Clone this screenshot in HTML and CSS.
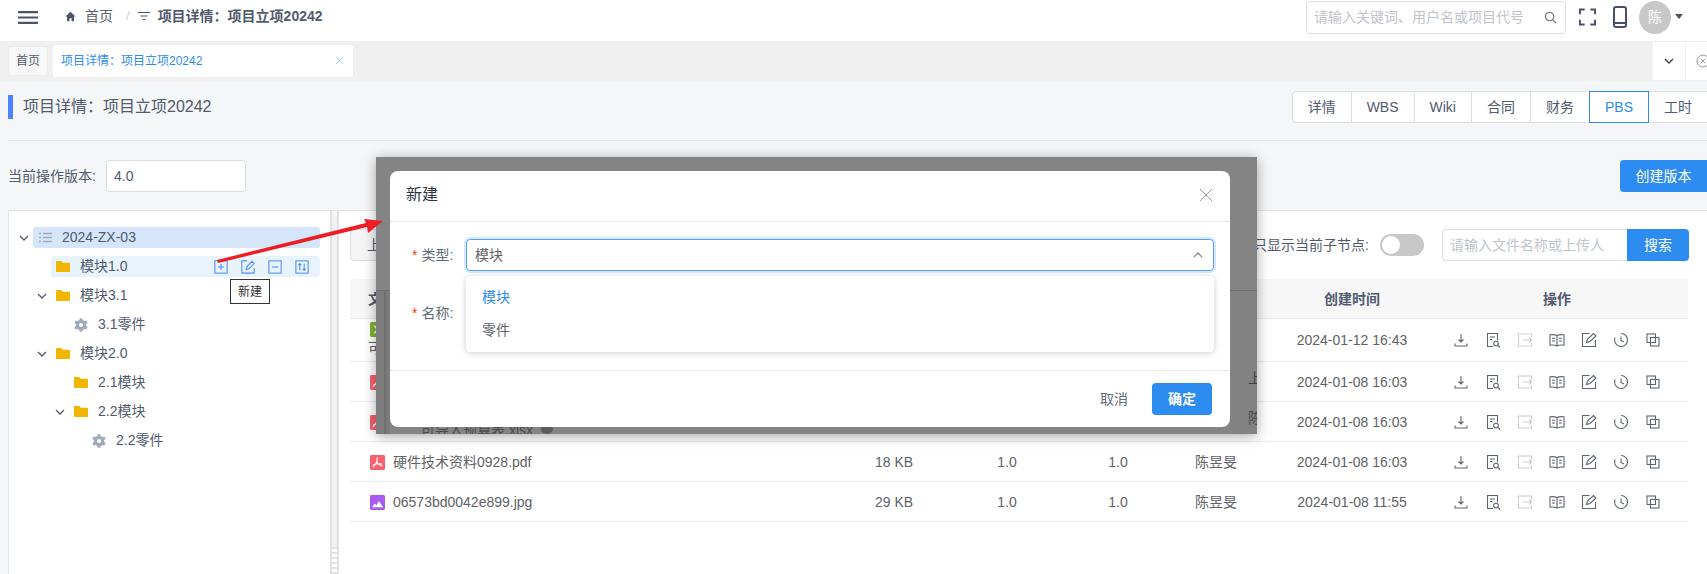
FILE: index.html
```html
<!DOCTYPE html>
<html lang="zh-CN">
<head>
<meta charset="utf-8">
<title>项目详情</title>
<link rel="stylesheet" href="styles.css">
</head>
<body>
<svg class="sprite" width="0" height="0" aria-hidden="true">
  <symbol id="i-download" viewBox="0 0 16 16"><path d="M8 2v8M5.500 7.500 8 10l2.500-2.500M2 11.500v2.500h12v-2.500"/></symbol>
  <symbol id="i-docsearch" viewBox="0 0 16 16"><path d="M8 14.500H2.500v-13h10v7M5 5h5M5 7.500h2.500M13 13.500l2 2"/><circle cx="11" cy="11.500" r="2.300"/></symbol>
  <symbol id="i-export" viewBox="0 0 16 16"><path d="M14.500 5V2h-13v12h13v-3M6 8h8.500M12 5.500 14.500 8 12 10.500"/></symbol>
  <symbol id="i-book" viewBox="0 0 16 16"><path d="M8 3.500C6 2.500 3 2.500 1 2.800v10.400c2-.3 5-.3 7 .8 2-1.100 5-1.100 7-.8V2.800c-2-.3-5-.3-7 .7zM8 3.500V14M3 6.300h3M3 9h3M10 6.300h3M10 9h3"/></symbol>
  <symbol id="i-edit" viewBox="0 0 16 16"><path d="M14.500 8v6.500h-13v-13h7M5.500 10.500l1-3.500 6-5.500 2.500 2.500-6 5.500z"/></symbol>
  <symbol id="i-clock" viewBox="0 0 16 16"><path d="M8 1.500a6.500 6.500 0 1 1-6 4M8 4.500v4l3 1.500"/></symbol>
  <symbol id="i-copy" viewBox="0 0 16 16"><rect x="2" y="2" width="8.500" height="8.500"/><rect x="5.500" y="5.500" width="8.500" height="8.500"/></symbol>
  <symbol id="i-gear" viewBox="0 0 16 16"><g class="gear"><path d="M8 .2v15.600M1.200 4.100l13.600 7.800M1.200 11.900l13.600-7.800"/></g><circle class="gear-body" cx="8" cy="8" r="6"/><circle class="gear-hole" cx="8" cy="8" r="2.300"/></symbol>
  <symbol id="i-folder" viewBox="0 0 14 11"><path d="M.8 0h4.400l1.800 1.800h6.200c.4 0 .8.400.8.800v7.600c0 .4-.4.800-.8.800H.8c-.4 0-.8-.4-.8-.8V.8C0 .4.400 0 .8 0z"/></symbol>
  <symbol id="i-chev" viewBox="0 0 10 6"><path d="M1 1l4 4 4-4"/></symbol>
  <symbol id="i-pdf" viewBox="0 0 16 16"><rect width="16" height="16" rx="1.500" fill="#f8616e"/><path d="M7.500 2.500c.6 3-1 7-4.500 10.500M7.500 8c1 1.500 3 3.500 5.800 4M3.500 10.500c2.500-1 6-1.500 9.500-.8" fill="none" stroke="#fff" stroke-width="1.200"/></symbol>
  <symbol id="i-img" viewBox="0 0 16 16"><rect width="16" height="16" rx="1.500" fill="#a95af0"/><path d="M2 13l3-4 2 2 2.500-4.500L14 13z" fill="#fff"/></symbol>
  <symbol id="i-xls" viewBox="0 0 16 16"><rect width="16" height="16" rx="1.500" fill="#7db72f"/><path d="M4.500 4l7 8M11.500 4l-7 8" fill="none" stroke="#fff" stroke-width="1.600"/></symbol>
</svg>

<header class="navbar">
  <svg class="hamburger" viewBox="0 0 20 13"><path d="M0 1.200h20M0 6.500h20M0 11.800h20"/></svg>
  <nav class="crumbs">
    <svg class="crumb-icon" viewBox="0 0 12 12"><path class="solid" d="M6 .8.500 6h1.700v5.200h2.600V7.800h2.400v3.400h2.600V6h1.700z"/></svg>
    <span class="crumb-link">首页</span>
    <span class="crumb-sep">/</span>
    <svg class="crumb-filter" viewBox="0 0 12 10"><path d="M0 1.500h12M2.500 5h7M4.500 8.500h3"/></svg>
    <strong class="crumb-current">项目详情&#xFF1A;项目立项20242</strong>
  </nav>
  <div class="nav-right">
    <div class="nav-search">
      <input class="nav-search-input" type="text" placeholder="请输入关键词、用户名或项目代号">
      <svg class="nav-search-icon" viewBox="0 0 14 14"><circle cx="6" cy="6" r="4.500"/><path d="M9.500 9.500 13 13"/></svg>
    </div>
    <svg class="fullscreen" viewBox="0 0 18 18"><path d="M1 6V1h5M12 1h5v5M17 12v5h-5M6 17H1v-5"/></svg>
    <svg class="phone" viewBox="0 0 14 22"><rect x="1" y="1" width="12" height="20" rx="2"/><path d="M1 17h12" /></svg>
    <span class="avatar">陈</span>
    <span class="caret"></span>
  </div>
</header>

<div class="tagsbar">
  <span class="tag">首页</span>
  <span class="tag tag-active">项目详情&#xFF1A;项目立项20242<svg class="tag-close" viewBox="0 0 10 10"><path d="M1 1l8 8M9 1 1 9"/></svg></span>
  <span class="tags-tools">
    <span class="tool-btn"><svg class="tool-chev" viewBox="0 0 10 6"><use href="#i-chev"/></svg></span>
    <span class="tool-btn tool-close"><svg class="tool-x" viewBox="0 0 14 14"><circle cx="7" cy="7" r="6"/><path d="M4.700 4.700l4.600 4.600M9.300 4.700l-4.600 4.600"/></svg></span>
  </span>
</div>

<main class="page">
  <div class="title-row">
    <h1 class="page-title">项目详情&#xFF1A;项目立项20242</h1>
    <div class="tabs">
      <span class="tab">详情</span><span class="tab">WBS</span><span class="tab">Wiki</span><span class="tab">合同</span><span class="tab">财务</span><span class="tab tab-on">PBS</span><span class="tab">工时</span>
    </div>
  </div>
  <div class="version-row">
    <label class="version-label">当前操作版本:</label>
    <input class="version-input" type="text" value="4.0">
    <button class="btn-create">创建版本</button>
  </div>

  <div class="workspace">
    <aside class="tree-panel">
      <div class="tree">
        <div class="node lvl0">
          <svg class="chev" viewBox="0 0 10 6"><use href="#i-chev"/></svg>
          <div class="node-body node-root">
            <svg class="list-icon" viewBox="0 0 13 11"><path d="M0 1.500h2M4 1.500h9M0 5.500h2M4 5.500h9M0 9.500h2M4 9.500h9"/></svg>
            <span class="node-text">2024-ZX-03</span>
          </div>
        </div>
        <div class="node lvl1">
          <span class="chev-space"></span>
          <div class="node-body node-hover">
            <svg class="folder"><use href="#i-folder"/></svg>
            <span class="node-text">模块1.0</span>
            <div class="node-actions">
              <svg class="act" viewBox="0 0 16 16"><rect x="1" y="1" width="14" height="14"/><path d="M8 4.500v7M4.500 8h7"/></svg>
              <svg class="act" viewBox="0 0 16 16"><path d="M15 9v6H1V1h6M6 11l.8-3.500L12.500 1.500l2.500 2.500-6 6z"/></svg>
              <svg class="act" viewBox="0 0 16 16"><rect x="1" y="1" width="14" height="14"/><path d="M4.500 8h7"/></svg>
              <svg class="act" viewBox="0 0 16 16"><rect x="1" y="1" width="14" height="14"/><path d="M5.500 12V4M3.800 6l1.700-2 1.700 2M10.500 4v8M8.800 10l1.700 2 1.700-2"/></svg>
            </div>
            <span class="tooltip">新建</span>
          </div>
        </div>
        <div class="node lvl1">
          <svg class="chev" viewBox="0 0 10 6"><use href="#i-chev"/></svg>
          <div class="node-body"><svg class="folder"><use href="#i-folder"/></svg><span class="node-text">模块3.1</span></div>
        </div>
        <div class="node lvl2">
          <span class="chev-space"></span>
          <div class="node-body"><svg class="gear-icon"><use href="#i-gear"/></svg><span class="node-text">3.1零件</span></div>
        </div>
        <div class="node lvl1">
          <svg class="chev" viewBox="0 0 10 6"><use href="#i-chev"/></svg>
          <div class="node-body"><svg class="folder"><use href="#i-folder"/></svg><span class="node-text">模块2.0</span></div>
        </div>
        <div class="node lvl2">
          <span class="chev-space"></span>
          <div class="node-body"><svg class="folder"><use href="#i-folder"/></svg><span class="node-text">2.1模块</span></div>
        </div>
        <div class="node lvl2">
          <svg class="chev" viewBox="0 0 10 6"><use href="#i-chev"/></svg>
          <div class="node-body"><svg class="folder"><use href="#i-folder"/></svg><span class="node-text">2.2模块</span></div>
        </div>
        <div class="node lvl3">
          <span class="chev-space"></span>
          <div class="node-body"><svg class="gear-icon"><use href="#i-gear"/></svg><span class="node-text">2.2零件</span></div>
        </div>
      </div>
      <div class="splitter"><span class="splitter-grip"></span></div>
    </aside>

    <section class="files">
      <div class="toolbar">
        <button class="btn-upload">上传文件</button>
        <span class="only-label">只显示当前子节点:</span>
        <span class="switch"><span class="switch-knob"></span></span>
        <div class="file-search">
          <input class="file-search-input" type="text" placeholder="请输入文件名称或上传人">
          <button class="file-search-btn">搜索</button>
        </div>
      </div>
      <table class="grid">
        <colgroup>
          <col class="c-name"><col class="c-size"><col class="c-ver"><col class="c-rev"><col class="c-user"><col class="c-time"><col class="c-ops">
        </colgroup>
        <thead>
          <tr><th class="th-name">文件名称</th><th>大小</th><th>版本</th><th>修订</th><th>上传人</th><th>创建时间</th><th>操作</th></tr>
        </thead>
        <tbody>
          <tr class="row-tall">
            <td class="td-name td-top"><svg class="ficon"><use href="#i-xls"/></svg><div class="name-wrap">可行性报告.xlsx</div></td>
            <td></td><td></td><td></td><td></td>
            <td>2024-01-12 16:43</td>
            <td class="ops"><svg class="op"><use href="#i-download"/></svg><svg class="op"><use href="#i-docsearch"/></svg><svg class="op op-off"><use href="#i-export"/></svg><svg class="op"><use href="#i-book"/></svg><svg class="op"><use href="#i-edit"/></svg><svg class="op"><use href="#i-clock"/></svg><svg class="op"><use href="#i-copy"/></svg></td>
          </tr>
          <tr>
            <td class="td-name"><svg class="ficon"><use href="#i-pdf"/></svg></td>
            <td></td><td></td><td></td><td></td>
            <td>2024-01-08 16:03</td>
            <td class="ops"><svg class="op"><use href="#i-download"/></svg><svg class="op"><use href="#i-docsearch"/></svg><svg class="op op-off"><use href="#i-export"/></svg><svg class="op"><use href="#i-book"/></svg><svg class="op"><use href="#i-edit"/></svg><svg class="op"><use href="#i-clock"/></svg><svg class="op"><use href="#i-copy"/></svg></td>
          </tr>
          <tr>
            <td class="td-name"><svg class="ficon"><use href="#i-pdf"/></svg></td>
            <td></td><td></td><td></td><td></td>
            <td>2024-01-08 16:03</td>
            <td class="ops"><svg class="op"><use href="#i-download"/></svg><svg class="op"><use href="#i-docsearch"/></svg><svg class="op op-off"><use href="#i-export"/></svg><svg class="op"><use href="#i-book"/></svg><svg class="op"><use href="#i-edit"/></svg><svg class="op"><use href="#i-clock"/></svg><svg class="op"><use href="#i-copy"/></svg></td>
          </tr>
          <tr>
            <td class="td-name"><svg class="ficon"><use href="#i-pdf"/></svg><span class="fname">硬件技术资料0928.pdf</span></td>
            <td>18 KB</td><td>1.0</td><td>1.0</td><td>陈昱旻</td>
            <td>2024-01-08 16:03</td>
            <td class="ops"><svg class="op"><use href="#i-download"/></svg><svg class="op"><use href="#i-docsearch"/></svg><svg class="op op-off"><use href="#i-export"/></svg><svg class="op"><use href="#i-book"/></svg><svg class="op"><use href="#i-edit"/></svg><svg class="op"><use href="#i-clock"/></svg><svg class="op"><use href="#i-copy"/></svg></td>
          </tr>
          <tr>
            <td class="td-name"><svg class="ficon"><use href="#i-img"/></svg><span class="fname">06573bd0042e899.jpg</span></td>
            <td>29 KB</td><td>1.0</td><td>1.0</td><td>陈昱旻</td>
            <td>2024-01-08 11:55</td>
            <td class="ops"><svg class="op"><use href="#i-download"/></svg><svg class="op"><use href="#i-docsearch"/></svg><svg class="op op-off"><use href="#i-export"/></svg><svg class="op"><use href="#i-book"/></svg><svg class="op"><use href="#i-edit"/></svg><svg class="op"><use href="#i-clock"/></svg><svg class="op"><use href="#i-copy"/></svg></td>
          </tr>
        </tbody>
      </table>
    </section>
  </div>
</main>

<div class="shot">
  <span class="shot-band"></span>
  <span class="shot-band-right"></span>
  <span class="shot-text shot-text-a">上</span>
  <span class="shot-text shot-text-b">陈</span>
  <span class="shot-text shot-text-c">可导入预算表.xlsx</span>
  <span class="shot-dot"></span>
  <div class="dialog">
    <div class="dialog-head">
      <span class="dialog-title">新建</span>
      <svg class="dialog-close" viewBox="0 0 12 12"><path d="M0 0l12 12M12 0 0 12"/></svg>
    </div>
    <div class="dialog-body">
      <div class="form-item">
        <label class="form-label"><span class="star">*</span>类型:</label>
        <div class="select">
          <span>模块</span>
          <svg class="select-arrow" viewBox="0 0 10 6"><path d="M1 5l4-4 4 4"/></svg>
          <div class="dropdown">
            <div class="option option-on">模块</div>
            <div class="option">零件</div>
          </div>
        </div>
      </div>
      <div class="form-item">
        <label class="form-label"><span class="star">*</span>名称:</label>
        <div class="text-field"></div>
      </div>
    </div>
    <div class="dialog-foot">
      <button class="btn-cancel">取消</button>
      <button class="btn-ok">确定</button>
    </div>
  </div>
</div>

<svg class="arrow" viewBox="0 0 1707 574" width="1707" height="574"><polygon points="217,260 366,223 364,219 383,221 368,233 367,227 218,263"/></svg>
</body>
</html>
```

FILE: styles.css
```css
* { box-sizing: border-box; }
html, body { margin: 0; padding: 0; height: 574px; overflow: hidden; }
body {
  position: relative;
  font-family: "Liberation Sans", "Noto Sans CJK SC", sans-serif;
  font-size: 14px;
  line-height: 20px;
  color: #606266;
  background: #f5f6f8;
}
input, button { font-family: inherit; line-height: 20px; }
.sprite { position: absolute; }
svg { display: block; flex: none; }

/* navbar */
.navbar { height: 41px; padding-bottom: 7px; background: #fff; display: flex; align-items: center; }
.hamburger { width: 20px; height: 13px; margin-left: 18px; fill: none; stroke: #4c5566; stroke-width: 2.2; }
.crumbs { display: flex; align-items: center; margin-left: 27px; margin-top: -2px; }
.crumb-icon { width: 11px; height: 11px; }
.solid { fill: #4c5566; }
.crumb-link { margin-left: 9px; color: #5a6270; }
.crumb-sep { margin-left: 13px; color: #c8ccd4; font-size: 13px; }
.crumb-filter { width: 12px; height: 10px; margin-left: 8px; fill: none; stroke: #4c5566; stroke-width: 1.2; }
.crumb-current { margin-left: 8px; font-weight: 700; color: #515a6e; }
.nav-right { margin-left: auto; display: flex; align-items: center; padding-right: 24px; }
.nav-search { position: relative; width: 260px; height: 33px; }
.nav-search-input { width: 100%; height: 100%; border: 1px solid #dcdee2; border-radius: 4px; padding: 0 30px 0 7px; font-size: 14px; outline: none; background: #fff; }
.nav-search-input::placeholder { color: #c0c4cc; opacity: 1; }
.nav-search-icon { position: absolute; right: 9px; top: 10px; width: 13px; height: 13px; fill: none; stroke: #707782; stroke-width: 1.3; }
.fullscreen { width: 17px; height: 18px; margin-left: 13px; fill: none; stroke: #46506a; stroke-width: 2; }
.phone { width: 14px; height: 22px; margin-left: 17px; fill: none; stroke: #46506a; stroke-width: 2; }
.avatar { width: 32px; height: 33px; margin-left: 12px; border-radius: 50%; background: #c8c8c8; color: #fff; display: flex; align-items: center; justify-content: center; font-size: 14px; }
.caret { width: 0; height: 0; margin-left: 4px; margin-top: -2px; border-left: 4.500px solid transparent; border-right: 4.500px solid transparent; border-top: 5px solid #4c5566; }

/* tags bar */
.tagsbar { height: 40px; background: #f0f0f0; display: flex; align-items: center; padding-left: 8px; overflow: hidden; }
.tag { width: 40px; height: 30px; background: #f7f7f7; border: 1px solid #ececec; border-radius: 3px; font-size: 12px; color: #515a6e; display: flex; align-items: center; justify-content: center; margin-top: -1px; }
.tag-active { width: 300px; height: 32px; margin-left: 5px; padding: 0 9px 0 8px; background: #fff; border: 0; color: #2d8cf0; justify-content: space-between; }
.tag-close { width: 9px; height: 9px; fill: none; stroke: #a9d0f7; stroke-width: 1.1; }
.tags-tools { margin-left: auto; display: flex; gap: 1px; height: 38px; }
.tool-btn { background: #fff; display: flex; align-items: center; justify-content: center; width: 32px; }
.tool-close { width: 21px; justify-content: flex-start; padding-left: 10px; }
.tool-chev { width: 10px; height: 6px; fill: none; stroke: #3d4656; stroke-width: 1.4; }
.tool-x { width: 14px; height: 14px; fill: none; stroke: #8a8f98; stroke-width: .9; }

/* page head */
.page { padding-left: 8px; }
.title-row { display: flex; align-items: center; height: 32px; margin-top: 10px; }
.page-title { margin: 0; height: 24px; line-height: 24px; padding-left: 10px; border-left: 5px solid #4d83fd; font-size: 16px; font-weight: 400; color: #515a6e; }
.tabs { margin-left: auto; margin-right: -1px; display: flex; height: 32px; }
.tab { padding: 0 15px; height: 32px; line-height: 30px; background: #fff; border: 1px solid #dcdee2; margin-left: -1px; color: #515a6e; font-size: 14px; }
.tab:first-child { margin-left: 0; border-radius: 4px 0 0 4px; }
.tab-on { border-color: #2d8cf0; color: #2d8cf0; position: relative; }
.version-row { margin-top: 17px; padding-top: 19px; border-top: 1px solid #e6e8ec; display: flex; align-items: center; height: 52px; }
.version-label { font-size: 14px; color: #515a6e; width: 98px; }
.version-input { width: 140px; height: 32px; border: 1px solid #dcdee2; border-radius: 4px; padding: 0 7px; font-size: 14px; color: #515a6e; background: #fff; outline: none; }
.btn-create { margin-left: auto; width: 87px; height: 32px; border: 0; background: #2d8cf0; color: #fff; border-radius: 4px 0 0 4px; font-size: 14px; }

/* workspace */
.workspace { display: flex; margin-top: 18px; height: 364px; }
.tree-panel { width: 331px; display: flex; background: #fff; border: 1px solid #e2e4e8; border-width: 1px 0 0 1px; }
.tree { flex: 1; padding-top: 16px; padding-right: 10px; }
.node { display: flex; align-items: center; height: 21px; margin-bottom: 8px; color: #515a6e; }
.lvl0 { padding-left: 6px; }
.lvl1 { padding-left: 24px; }
.lvl2 { padding-left: 42px; }
.lvl3 { padding-left: 60px; }
.chev { width: 10px; height: 6px; margin: 0 4px; fill: none; stroke: #515a6e; stroke-width: 1.3; }
.chev-space { width: 18px; flex: none; }
.node-body { flex: 1; height: 21px; display: flex; align-items: center; gap: 10px; padding-left: 5px; border-radius: 3px; position: relative; }
.node-text { margin-top: -2px; }
.node-root { background: #d5e6fb; padding-left: 6px; }
.node-hover { background: #e9f3fe; }
.list-icon { width: 13px; height: 11px; fill: none; stroke: #a3abb8; stroke-width: 1.500; }
.folder { width: 14px; height: 11px; fill: #f1b600; }
.gear-icon { width: 14px; height: 14px; }
.gear path { fill: none; stroke: #9eaabb; stroke-width: 3.4; }
.gear-body { fill: #9eaabb; }
.gear-hole { fill: #fff; }
.node-actions { margin-left: auto; display: flex; gap: 13px; padding-right: 11px; }
.act { width: 14px; height: 14px; fill: none; stroke: #4c8df6; stroke-width: 1.200; }
.tooltip { position: absolute; right: 50px; top: 23px; width: 40px; height: 25px; border: 1px solid #333; background: #fff; color: #333; font-size: 12px; display: flex; align-items: center; justify-content: center; }
.splitter { width: 9px; flex: none; background: #f3f3f5; border: 1px solid #e0e1e5; border-width: 0 2px; position: relative; }
.splitter-grip { position: absolute; left: 0; right: 0; bottom: 0; height: 27px; background: repeating-linear-gradient(180deg, #e0e1e5 0 2px, #fff 2px 5px); }

/* files */
.files { flex: 1; min-width: 0; background: #fff; border-top: 1px solid #e2e4e8; padding-left: 11px; padding-top: 18px; }
.toolbar { display: flex; align-items: center; height: 32px; padding-right: 18px; margin-bottom: 18px; }
.btn-upload { width: 90px; height: 32px; padding: 0; background: #f5f5f5; border: 1px solid #dcdee2; border-radius: 4px; color: #515a6e; font-size: 14px; }
.only-label { margin-left: auto; font-size: 14px; color: #515a6e; }
.switch { width: 44px; height: 22px; margin-left: 11px; background: #c8c8c8; border-radius: 11px; padding: 2px; }
.switch-knob { display: block; width: 18px; height: 18px; border-radius: 50%; background: #fff; }
.file-search { display: flex; margin-left: 18px; height: 32px; }
.file-search-input { width: 185px; border: 1px solid #dcdee2; border-right: 0; border-radius: 4px 0 0 4px; padding: 0 7px; font-size: 14px; outline: none; }
.file-search-input::placeholder { color: #c0c4cc; opacity: 1; }
.file-search-btn { width: 62px; border: 0; background: #2d8cf0; color: #fff; border-radius: 0 4px 4px 0; font-size: 14px; }
.grid { width: 1338px; table-layout: fixed; border-collapse: separate; border-spacing: 0; color: #606266; }
.c-name { width: 506px; } .c-size { width: 76px; } .c-ver { width: 150px; } .c-rev { width: 72px; }
.c-user { width: 124px; } .c-time { width: 148px; } .c-ops { width: 262px; }
.grid th { height: 40px; padding: 0; background: #f7f7f7; border-bottom: 1px solid #e8eaec; font-weight: 700; color: #515a6e; text-align: center; }
.grid .th-name { text-align: left; padding-left: 18px; }
.grid td { height: 40px; padding: 0; border-bottom: 1px solid #e8eaec; text-align: center; white-space: nowrap; }
.grid .row-tall td { height: 43px; }
.grid .td-name { text-align: left; padding-left: 20px; }
.grid .td-top { vertical-align: top; padding-top: 3px; padding-left: 18px; }
.ficon { width: 15px; height: 15px; display: inline-block; vertical-align: middle; }
.td-top .ficon { display: block; margin-left: 2px; }
.name-wrap { margin-top: 1px; line-height: 20px; }
.fname { margin-left: 8px; vertical-align: middle; }
.ops { font-size: 0; }
.op { display: inline-block; width: 16px; height: 16px; margin: 0 8px; fill: none; stroke: #5e6673; stroke-width: 1.100; vertical-align: middle; }
.op-off { stroke: #c9ced6; }

/* pasted modal */
.shot { position: absolute; left: 376px; top: 157px; width: 881px; height: 277px; padding: 14px 27px 7px 14px; background: #848484; box-shadow: 0 2px 12px rgba(0,0,0,.35); overflow: visible; }
.shot-band { position: absolute; left: 0; top: 133px; bottom: 0; width: 14px; background: linear-gradient(90deg, #7c7c7c 0 8px, #6f6f6f 8px 10px, #7a7a7a 10px); border-top: 1px solid #707070; }
.shot-band-right { position: absolute; right: 0; top: 133px; bottom: 0; width: 27px; background: #828282; border-top: 1px solid #707070; }
.shot-text { position: absolute; color: #3c3f48; font-size: 14px; line-height: 20px; white-space: nowrap; overflow: hidden; }
.shot-text-a { left: 872px; top: 211px; width: 9px; }
.shot-text-b { left: 872px; top: 251px; width: 9px; color: #4c4c52; }
.shot-text-c { left: 45px; top: 263px; height: 14px; color: #4a4a4a; }
.shot-dot { position: absolute; left: 165px; top: 267px; width: 12px; height: 10px; border-radius: 50%; background: #5c5c5c; }
.dialog { position: relative; height: 256px; background: #fff; border-radius: 8px; display: flex; flex-direction: column; }
.dialog-head { height: 51px; flex: none; border-bottom: 1px solid #e8eaec; display: flex; align-items: center; justify-content: space-between; padding: 0 18px 2px 16px; }
.dialog-title { font-size: 16px; color: #2f3542; }
.dialog-close { width: 12px; height: 12px; fill: none; stroke: #9a9da3; stroke-width: 1; }
.dialog-body { height: 148px; flex: none; padding: 17px 16px 0 22px; display: flex; flex-direction: column; gap: 26px; }
.form-item { display: flex; align-items: center; height: 32px; }
.form-label { width: 54px; flex: none; color: #606a78; display: flex; align-items: center; gap: 4px; }
.star { color: #ed3f14; font-size: 14px; }
.select { position: relative; flex: 1; height: 32px; border: 1px solid #57a3f3; border-radius: 4px; box-shadow: 0 0 0 2px rgba(45,140,240,.2); display: flex; align-items: center; justify-content: space-between; padding: 0 10px 0 8px; color: #606266; }
.select-arrow { width: 10px; height: 6px; fill: none; stroke: #808695; stroke-width: 1.300; }
.dropdown { position: absolute; left: -1px; right: -1px; top: 36px; height: 76px; padding: 5px 0; background: #fff; border-radius: 4px; box-shadow: 0 1px 6px rgba(0,0,0,.2); z-index: 2; }
.option { height: 33px; line-height: 33px; padding-left: 16px; color: #606266; }
.option-on { color: #2d8cf0; }
.text-field { flex: 1; height: 32px; border: 1px solid #dcdee2; border-radius: 4px; }
.dialog-foot { flex: 1; border-top: 1px solid #e8eaec; padding: 12px 18px 0 0; display: flex; justify-content: flex-end; align-items: flex-start; }
.btn-cancel { width: 60px; height: 32px; border: 0; background: transparent; color: #606a78; font-size: 14px; margin-right: 8px; }
.btn-ok { width: 60px; height: 32px; border: 0; border-radius: 4px; background: #2d8cf0; color: #fff; font-size: 14px; font-weight: 700; }

.arrow { position: absolute; left: 0; top: 0; pointer-events: none; fill: #ee1c25; }
```
